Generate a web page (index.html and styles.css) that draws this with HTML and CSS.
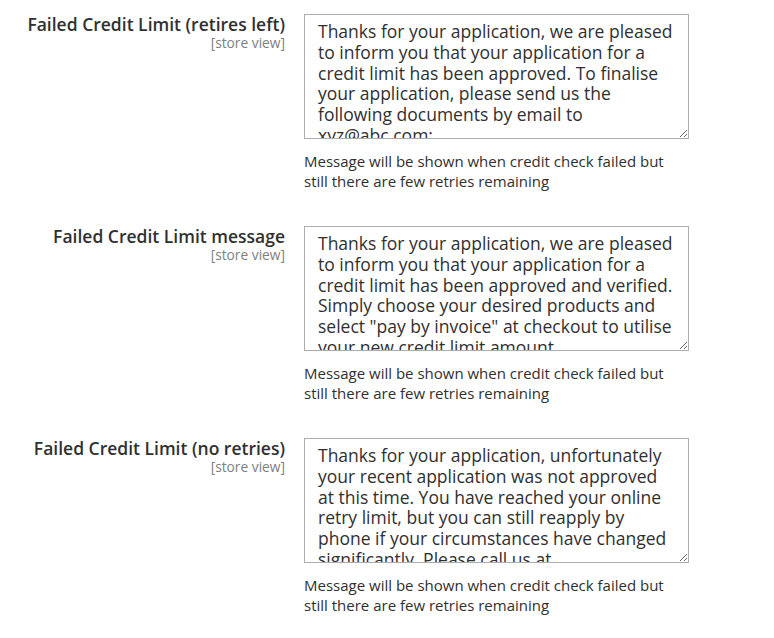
FILE: index.html
```html
<!DOCTYPE html>
<html lang="en">
<head>
<meta charset="utf-8">
<title>Credit Limit Messages</title>
<link rel="stylesheet" href="styles.css">
</head>
<body>
<div class="form">
  <div class="row">
    <div class="label-col">
      <label class="label" for="f1">Failed Credit Limit (retires left)</label>
      <span class="scope">[store view]</span>
    </div>
    <div class="control">
      <textarea id="f1" class="textarea">Thanks for your application, we are pleased to inform you that your application for a credit limit has been approved. To finalise your application, please send us the following documents by email to xyz@abc.com:
- Copy of your ID
- Proof of address</textarea>
      <p class="note">Message will be shown when credit check failed but still there are few retries remaining</p>
    </div>
  </div>
  <div class="row">
    <div class="label-col">
      <label class="label" for="f2">Failed Credit Limit message</label>
      <span class="scope">[store view]</span>
    </div>
    <div class="control">
      <textarea id="f2" class="textarea">Thanks for your application, we are pleased to inform you that your application for a credit limit has been approved and verified. Simply choose your desired products and select "pay by invoice" at checkout to utilise your new credit limit amount.</textarea>
      <p class="note">Message will be shown when credit check failed but still there are few retries remaining</p>
    </div>
  </div>
  <div class="row">
    <div class="label-col">
      <label class="label" for="f3">Failed Credit Limit (no retries)</label>
      <span class="scope">[store view]</span>
    </div>
    <div class="control">
      <textarea id="f3" class="textarea">Thanks for your application, unfortunately your recent application was not approved at this time. You have reached your online retry limit, but you can still reapply by phone if your circumstances have changed significantly. Please call us at +44&#160;(0)&#160;800&#160;123&#160;4567.</textarea>
      <p class="note">Message will be shown when credit check failed but still there are few retries remaining</p>
    </div>
  </div>
</div>
</body>
</html>
```

FILE: styles.css
```css
html, body {
  margin: 0;
  padding: 0;
  background: #ffffff;
}

body {
  font-family: "Open Sans", "Liberation Sans", sans-serif;
  color: #303030;
}

.form {
  padding-top: 14px;
  display: flex;
  flex-direction: column;
  gap: 35px;
}

.row {
  display: grid;
  grid-template-columns: 285px 385px;
  column-gap: 19px;
  align-items: start;
}

.label-col {
  display: flex;
  flex-direction: column;
  align-items: flex-end;
  text-align: right;
}

.label {
  font-size: 17.5px;
  font-weight: 600;
  line-height: 21px;
  color: #303030;
}

.scope {
  font-size: 13.75px;
  line-height: 15px;
  color: #808080;
}

.control {
  display: flex;
  flex-direction: column;
}

.textarea {
  box-sizing: border-box;
  width: 385px;
  height: 125px;
  margin: 0;
  padding: 6px 12px 0 13px;
  border: 1px solid #adadad;
  border-radius: 0;
  font-family: "Open Sans", "Liberation Sans", sans-serif;
  font-size: 17.5px;
  line-height: 20.8px;
  color: #303030;
  background: #ffffff;
  overflow: hidden;
  resize: both;
}

.note {
  margin: 12px 0 0;
  font-size: 15px;
  line-height: 20px;
  color: #303030;
}
```
